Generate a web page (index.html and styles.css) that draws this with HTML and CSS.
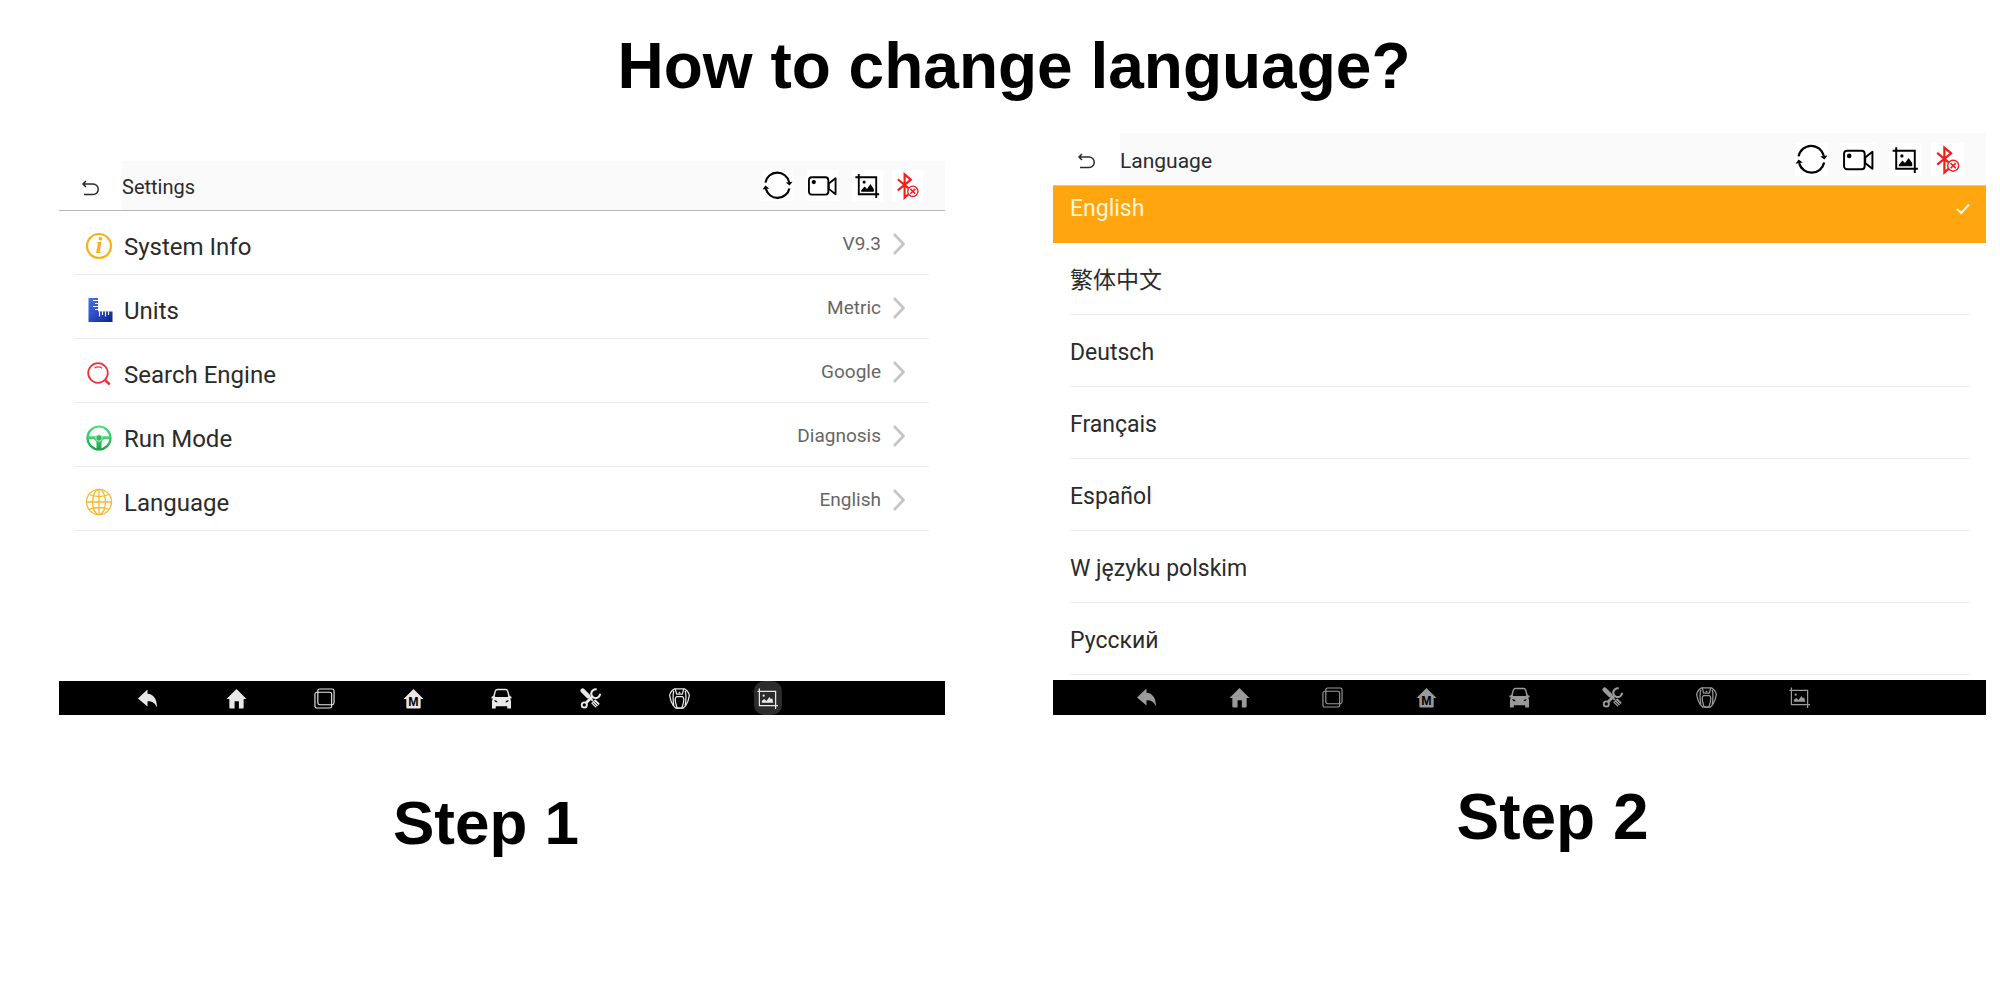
FILE: index.html
```html
<!DOCTYPE html>
<html lang="en">
<head>
  <meta charset="UTF-8">
  <meta name="viewport" content="width=device-width, initial-scale=1.0">
  <title>How to change language?</title>
  <link rel="stylesheet" href="styles.css">
</head>
<body>
  <!-- icon sprite -->
  <svg class="sprite" aria-hidden="true">
    <defs>
      <linearGradient id="blue" x1="0" y1="0" x2="1" y2="1">
        <stop offset="0" stop-color="#4a74e8"/>
        <stop offset="1" stop-color="#0a2290"/>
      </linearGradient>
      <linearGradient id="green" x1="0" y1="0" x2="0" y2="1">
        <stop offset="0" stop-color="#4ade80"/>
        <stop offset="1" stop-color="#22a34a"/>
      </linearGradient>
    </defs>
    <symbol id="back" viewBox="0 0 20 16">
      <path d="M5 1 2 4l3 3M2 4h10a5 5 0 0 1 0 10.500H3" fill="none" stroke="currentColor" stroke-width="1.500"/>
    </symbol>
    <symbol id="refresh" viewBox="0 0 32 32">
      <path d="M3.500 13A12.500 12.500 0 0 1 28 12.500M28.300 19A12.500 12.500 0 0 1 4 19.500" fill="none" stroke="currentColor" stroke-width="2.200"/>
      <path d="M24.500 13 31.500 12 28.500 16zM7.500 19 .5 20 3.500 16z" fill="currentColor"/>
    </symbol>
    <symbol id="video" viewBox="0 0 32 32">
      <rect x="2" y="7.500" width="20" height="18" rx="3" fill="none" stroke="currentColor" stroke-width="1.900"/>
      <path d="M22.500 14 29.500 8.500v16.500L22.500 19.500z" fill="none" stroke="currentColor" stroke-width="1.900" stroke-linejoin="round"/>
      <circle cx="7" cy="12.500" r="2.200" fill="currentColor"/>
    </symbol>
    <symbol id="shot" viewBox="0 0 32 32">
      <path d="M7 4v21h21M3.500 7.500H25V29" fill="none" stroke="currentColor" stroke-width="1.900"/>
      <circle cx="12.500" cy="12.500" r="1.600" fill="currentColor"/>
      <path d="M9.500 22.500v-1.500l3.500-4 2.500 2.500 3.500-5 3.500 5v3z" fill="currentColor"/>
    </symbol>
    <symbol id="bluetooth" viewBox="0 0 32 32">
      <path d="M6 9.500 18.500 20M6 21 19.500 10 13 4.500v24l4-3.500" fill="none" stroke="currentColor" stroke-width="2.200"/>
      <circle cx="21.500" cy="22" r="5.300" fill="#fff" stroke="currentColor" stroke-width="1.400"/>
      <path d="m19 19.500 5 5m0-5-5 5" stroke="currentColor" stroke-width="1.600"/>
    </symbol>
    <symbol id="ruler" viewBox="0 0 28 28">
      <path d="M3.500 2H13v13.500h14.500V26h-24z" fill="url(#blue)"/>
      <path d="M8 4.500h5M10 7.500h3M8 10.500h5M10 13.500h3M14.500 15.500v5M17.500 15.500v3.500M20.500 15.500v5M23.500 15.500v3.500" stroke="#fff" stroke-width="1.100"/>
    </symbol>
    <symbol id="search" viewBox="0 0 28 28">
      <circle cx="13" cy="13" r="9.800" fill="none" stroke="currentColor" stroke-width="1.800"/>
      <path d="M9.500 8a7 7 0 0 1 7.500 .3" fill="none" stroke="currentColor" stroke-width="1.200"/>
      <path d="m20 20 4.800 4.500" stroke="currentColor" stroke-width="2.400"/>
    </symbol>
    <symbol id="wheel" viewBox="0 0 28 28">
      <circle cx="14" cy="14" r="11.500" fill="none" stroke="url(#green)" stroke-width="2.200"/>
      <path d="M3 12.300h8a4 4 0 0 1 6 0h8v3h-5.500q-3 .7-3 4.500V25h-5v-5.200q0-3.800-3-4.500H3z" fill="url(#green)"/>
      <circle cx="14" cy="14" r="3.200" fill="#2ebf5a" stroke="#c8f5d5" stroke-width=".8"/>
    </symbol>
    <symbol id="globe" viewBox="0 0 28 28">
      <g fill="none" stroke="currentColor" stroke-width="1.300">
        <circle cx="14" cy="14" r="12.600"/>
        <ellipse cx="14" cy="14" rx="6.500" ry="12.600"/>
        <path d="M14 1.500v25M1.500 14h25M4 6.500q10 4 20 0M4 21.500q10-4 20 0"/>
      </g>
    </symbol>
    <symbol id="chevron" viewBox="0 0 14 24">
      <path d="m2 2 9.500 10L2 22" fill="none" stroke="currentColor" stroke-width="2.600"/>
    </symbol>
    <symbol id="check" viewBox="0 0 14 12">
      <path d="m1 6 4.200 4L13 1.500" fill="none" stroke="currentColor" stroke-width="2"/>
    </symbol>

    <!-- bottom bar -->
    <symbol id="reply" viewBox="0 0 22 22">
      <path d="M1 11 11 1.500V6c6 .5 10 5 10 14.500-2-4.500-5-6.500-10-6.500v5.500z" fill="currentColor"/>
    </symbol>
    <symbol id="home" viewBox="0 0 22 22">
      <path d="M11 1 21.500 11.500H18.500V20.500a1 1 0 0 1-1 1H13.500V14H9v7.500H4.500a1 1 0 0 1-1-1V11.500H.5z" fill="currentColor"/>
    </symbol>
    <symbol id="recent" viewBox="0 0 22 22">
      <g fill="none" stroke="currentColor" stroke-width="1.200">
        <rect x="4" y="1" width="17" height="16.500" rx="2"/>
        <rect x="1" y="4.500" width="17.500" height="16.500" rx="2"/>
      </g>
    </symbol>
    <symbol id="home-m" viewBox="0 0 22 22">
      <path d="M11 1 21.500 11.500H18.500V20.500a1 1 0 0 1-1 1H4.500a1 1 0 0 1-1-1V11.500H.5z" fill="currentColor"/>
    </symbol>
    <symbol id="car" viewBox="0 0 22 22">
      <path fill-rule="evenodd" fill="currentColor" d="M7 .8h8q2.500 0 3.300 2.500l1.400 5 1.800.9v1.800h-1.500q1 1.500 1 3.500v7H17v-2.500H5v2.500H1v-7q0-2 1-3.500H.5V9.200l1.800-.9 1.400-5Q4.500.8 7 .8zM7 2.300q-1.500 0-1.900 1.400L4 8.500q-.1.900 1 .9h12q1.100 0 1-.9l-1.100-4.800Q16.500 2.300 15 2.300zM3.500 12.500q0 2.500 3.500 2.500-.5-2-3.500-2.500zm15 0q-3 .5-3.500 2.500 3.500 0 3.500-2.500z"/>
    </symbol>
    <symbol id="tools" viewBox="0 0 22 22">
      <path d="M2.800 2.800 8.500 8.500" stroke="currentColor" stroke-width="4.600" stroke-linecap="round"/>
      <path d="m8 8 5.500 5.500" stroke="currentColor" stroke-width="2"/>
      <path d="m13.800 13.800 4.800 4.800" stroke="currentColor" stroke-width="6"/>
      <path d="m13.500 15.500 4.500 4.500M15 14l4.500 4.500" stroke="#000" stroke-width=".8"/>
      <path d="M6.500 15.500 13 9" stroke="currentColor" stroke-width="3"/>
      <path d="M17.500 1.500a4.600 4.600 0 1 0 3.500 4.500" fill="none" stroke="currentColor" stroke-width="2.200"/>
      <circle cx="4.500" cy="17.800" r="2.700" fill="#000" stroke="currentColor" stroke-width="2"/>
    </symbol>
    <symbol id="vci" viewBox="0 0 22 22">
      <g fill="none" stroke="currentColor" stroke-width="1.300" stroke-linejoin="round">
        <path d="M5.500 1h11q4.500 3 4.800 7-.8 6-3.800 10.500L15 21H7l-2.500-2.500Q1.500 14 .7 8 1 4 5.500 1z"/>
        <path d="M6.500 1 8 6.500h6L15.500 1M8 9h6q1.500 1 1.500 3t-1 5.500L13.500 21h-5l-1-3.500Q6.500 14 6.500 12T8 9z"/>
        <path d="M5 3Q3.500 9 5 18.500M17 3q1.500 6 0 15.500"/>
      </g>
      <circle cx="11" cy="4.800" r="1" fill="currentColor"/>
    </symbol>
    <symbol id="shot-thin" viewBox="0 0 22 22">
      <path d="M2.500.5v18H22M.5 3.500h19V22" fill="none" stroke="currentColor" stroke-width="1.300"/>
      <circle cx="7" cy="8" r="1.200" fill="currentColor"/>
      <path d="M5 15.500v-2l2.500-2 2.500 2 3-4 1.500 2 1.500-.5 1 4.500z" fill="currentColor"/>
    </symbol>
  </svg>

  <h1 class="title">How to change language?</h1>

  <main class="steps">
    <section class="step step-one">
      <div class="screen">
        <header class="topbar">
          <button class="back" aria-label="Back"><svg><use href="#back"/></svg></button>
          <div class="topbar-main">
            <h2>Settings</h2>
            <div class="actions">
              <button aria-label="Refresh"><svg><use href="#refresh"/></svg></button>
              <button aria-label="Record"><svg><use href="#video"/></svg></button>
              <button aria-label="Screenshot"><svg><use href="#shot"/></svg></button>
              <button class="bt" aria-label="Bluetooth off"><svg><use href="#bluetooth"/></svg></button>
            </div>
          </div>
        </header>
        <ul class="settings">
          <li><button><svg class="icon amber" viewBox="0 0 28 28"><circle cx="14" cy="14" r="12" fill="none" stroke="currentColor" stroke-width="2.200"/><text x="14" y="21" text-anchor="middle" class="info-letter">i</text></svg><span class="name">System Info</span><span class="value">V9.3</span><svg class="chevron"><use href="#chevron"/></svg></button></li>
          <li><button><svg class="icon"><use href="#ruler"/></svg><span class="name">Units</span><span class="value">Metric</span><svg class="chevron"><use href="#chevron"/></svg></button></li>
          <li><button><svg class="icon red"><use href="#search"/></svg><span class="name">Search Engine</span><span class="value">Google</span><svg class="chevron"><use href="#chevron"/></svg></button></li>
          <li><button><svg class="icon"><use href="#wheel"/></svg><span class="name">Run Mode</span><span class="value">Diagnosis</span><svg class="chevron"><use href="#chevron"/></svg></button></li>
          <li><button><svg class="icon gold"><use href="#globe"/></svg><span class="name">Language</span><span class="value">English</span><svg class="chevron"><use href="#chevron"/></svg></button></li>
        </ul>
        <nav class="navbar">
          <button aria-label="Back"><svg><use href="#reply"/></svg></button>
          <button aria-label="Home"><svg><use href="#home"/></svg></button>
          <button aria-label="Recent apps"><svg><use href="#recent"/></svg></button>
          <button aria-label="Main menu"><svg viewBox="0 0 22 22"><use href="#home-m"/><text x="11" y="19" text-anchor="middle" class="m-letter">M</text></svg></button>
          <button aria-label="Vehicle"><svg><use href="#car"/></svg></button>
          <button aria-label="Tools"><svg><use href="#tools"/></svg></button>
          <button aria-label="VCI"><svg><use href="#vci"/></svg></button>
          <button class="pressed" aria-label="Screenshot"><svg><use href="#shot-thin"/></svg></button>
        </nav>
      </div>
      <p class="caption">Step 1</p>
    </section>

    <section class="step step-two">
      <div class="screen">
        <header class="topbar">
          <button class="back" aria-label="Back"><svg><use href="#back"/></svg></button>
          <div class="topbar-main">
            <h2>Language</h2>
            <div class="actions">
              <button aria-label="Refresh"><svg><use href="#refresh"/></svg></button>
              <button aria-label="Record"><svg><use href="#video"/></svg></button>
              <button aria-label="Screenshot"><svg><use href="#shot"/></svg></button>
              <button class="bt" aria-label="Bluetooth off"><svg><use href="#bluetooth"/></svg></button>
            </div>
          </div>
        </header>
        <ul class="languages">
          <li class="selected"><button>English<svg class="check"><use href="#check"/></svg></button></li>
          <li><button lang="zh">繁体中文</button></li>
          <li><button lang="de">Deutsch</button></li>
          <li><button lang="fr">Français</button></li>
          <li><button lang="es">Español</button></li>
          <li><button lang="pl">W języku polskim</button></li>
          <li><button lang="ru">Русский</button></li>
        </ul>
        <nav class="navbar">
          <button aria-label="Back"><svg><use href="#reply"/></svg></button>
          <button aria-label="Home"><svg><use href="#home"/></svg></button>
          <button aria-label="Recent apps"><svg><use href="#recent"/></svg></button>
          <button aria-label="Main menu"><svg viewBox="0 0 22 22"><use href="#home-m"/><text x="11" y="19" text-anchor="middle" class="m-letter">M</text></svg></button>
          <button aria-label="Vehicle"><svg><use href="#car"/></svg></button>
          <button aria-label="Tools"><svg><use href="#tools"/></svg></button>
          <button aria-label="VCI"><svg><use href="#vci"/></svg></button>
          <button aria-label="Screenshot"><svg><use href="#shot-thin"/></svg></button>
        </nav>
      </div>
      <p class="caption">Step 2</p>
    </section>
  </main>
</body>
</html>
```

FILE: styles.css
```css
:root {
  --text: #2b2b2b;
  --muted: #666;
  --line: #ececec;
  --orange: #ffa50f;
}
* { box-sizing: border-box; }
body {
  margin: 0;
  background: #fff;
  color: #000;
  font-family: "Liberation Sans", Arial, sans-serif;
}
h1, h2, p, ul {
  margin: 0;
  padding: 0;
}
ul { list-style: none; }
button {
  padding: 0;
  border: 0;
  background: none;
  color: inherit;
  font: inherit;
  text-align: left;
  cursor: pointer;
}
svg { display: block; }
.sprite {
  position: absolute;
  width: 0;
  height: 0;
}

.title, .caption {
  font-size: 64px;
  font-weight: 700;
  line-height: 72px;
  text-align: center;
}
.title { padding: 30px 0 31px 28px; }

.steps {
  display: grid;
  grid-template-columns: 886fr 933fr;
  gap: 108px;
  align-items: start;
  padding: 0 14px 0 59px;
}
.step-one { padding-top: 28px; }
.step-one .caption {
  padding: 72px 32px 0 0;
  font-size: 62px;
}
.step-two .caption { padding: 66px 0 0 66px; }

.screen {
  color: var(--text);
  font-family: Roboto, "Noto Sans CJK SC", sans-serif;
}

/* top bar */
.topbar {
  display: flex;
  height: 50px;
  border-bottom: 1px solid #b4b6b8;
}
.step-two .topbar {
  height: 53px;
  border-bottom: 1px solid #d8c8a8;
}
.back {
  width: 63px;
  padding: 4px 0 0 22px;
}
.step-two .back {
  width: 67px;
  padding-left: 24px;
}
.back svg {
  width: 20px;
  height: 16px;
}
.topbar-main {
  flex: 1;
  display: flex;
  align-items: center;
  justify-content: space-between;
  padding-right: 22px;
  background: #fafafa;
}
.topbar h2 {
  padding-top: 3px;
  font-size: 20px;
  font-weight: 400;
  line-height: 24px;
}
.step-two .topbar h2 { font-size: 21px; }
.actions {
  display: flex;
  gap: 14px;
  color: #000;
}
.actions button { background: #fff; }
.actions svg {
  width: 31px;
  height: 31px;
}
.step-two .actions svg {
  width: 33px;
  height: 33px;
}
.actions .bt {
  margin-left: -5px;
  color: #f0201c;
}

/* settings list */
.settings { padding: 0 16px 150px; }
.settings li { border-bottom: 1px solid var(--line); }
.settings button {
  display: flex;
  align-items: center;
  width: 100%;
  height: 63px;
  padding: 6px 23px 0 10px;
}
.icon {
  width: 28px;
  height: 28px;
  margin-right: 11px;
}
.amber { color: #fbb011; }
.red { color: #ee3338; }
.gold { color: #f5b92a; }
.name {
  flex: 1;
  padding-top: 2px;
  font-size: 24px;
  line-height: 30px;
}
.value {
  padding-bottom: 4px;
  color: var(--muted);
  font-size: 19px;
  line-height: 24px;
}
.chevron {
  width: 14px;
  height: 24px;
  margin: 0 0 4px 11px;
  color: #c4c4c4;
}
.info-letter {
  fill: currentColor;
  font: italic 700 24px "Liberation Serif", serif;
}

/* language list */
.languages { padding-bottom: 5px; }
.languages li { padding: 0 16px 0 17px; }
.languages button {
  display: flex;
  align-items: center;
  justify-content: space-between;
  width: 100%;
  height: 72px;
  padding-top: 4px;
  border-bottom: 1px solid var(--line);
  font-size: 23px;
  line-height: 28px;
}
.languages .selected {
  background: var(--orange);
  color: #fff5d8;
}
.selected button {
  height: 57px;
  padding: 0 0 12px;
  border: 0;
}
.check {
  width: 14px;
  height: 12px;
}

/* bottom bar */
.navbar {
  display: grid;
  grid-template-columns: repeat(9, 1fr);
  height: 34px;
  padding: 0 5%;
  background: #000;
  color: #e8e8e8;
}
.step-two .navbar {
  height: 35px;
  color: #9a9a9a;
}
.navbar button {
  display: grid;
  place-items: center;
  justify-self: center;
  width: 28px;
}
.navbar svg {
  width: 21px;
  height: 21px;
}
.navbar .pressed {
  border-radius: 10px;
  background: #2c2c2c;
}
.m-letter {
  fill: #000;
  font: 700 13px "Liberation Sans", sans-serif;
}
```
